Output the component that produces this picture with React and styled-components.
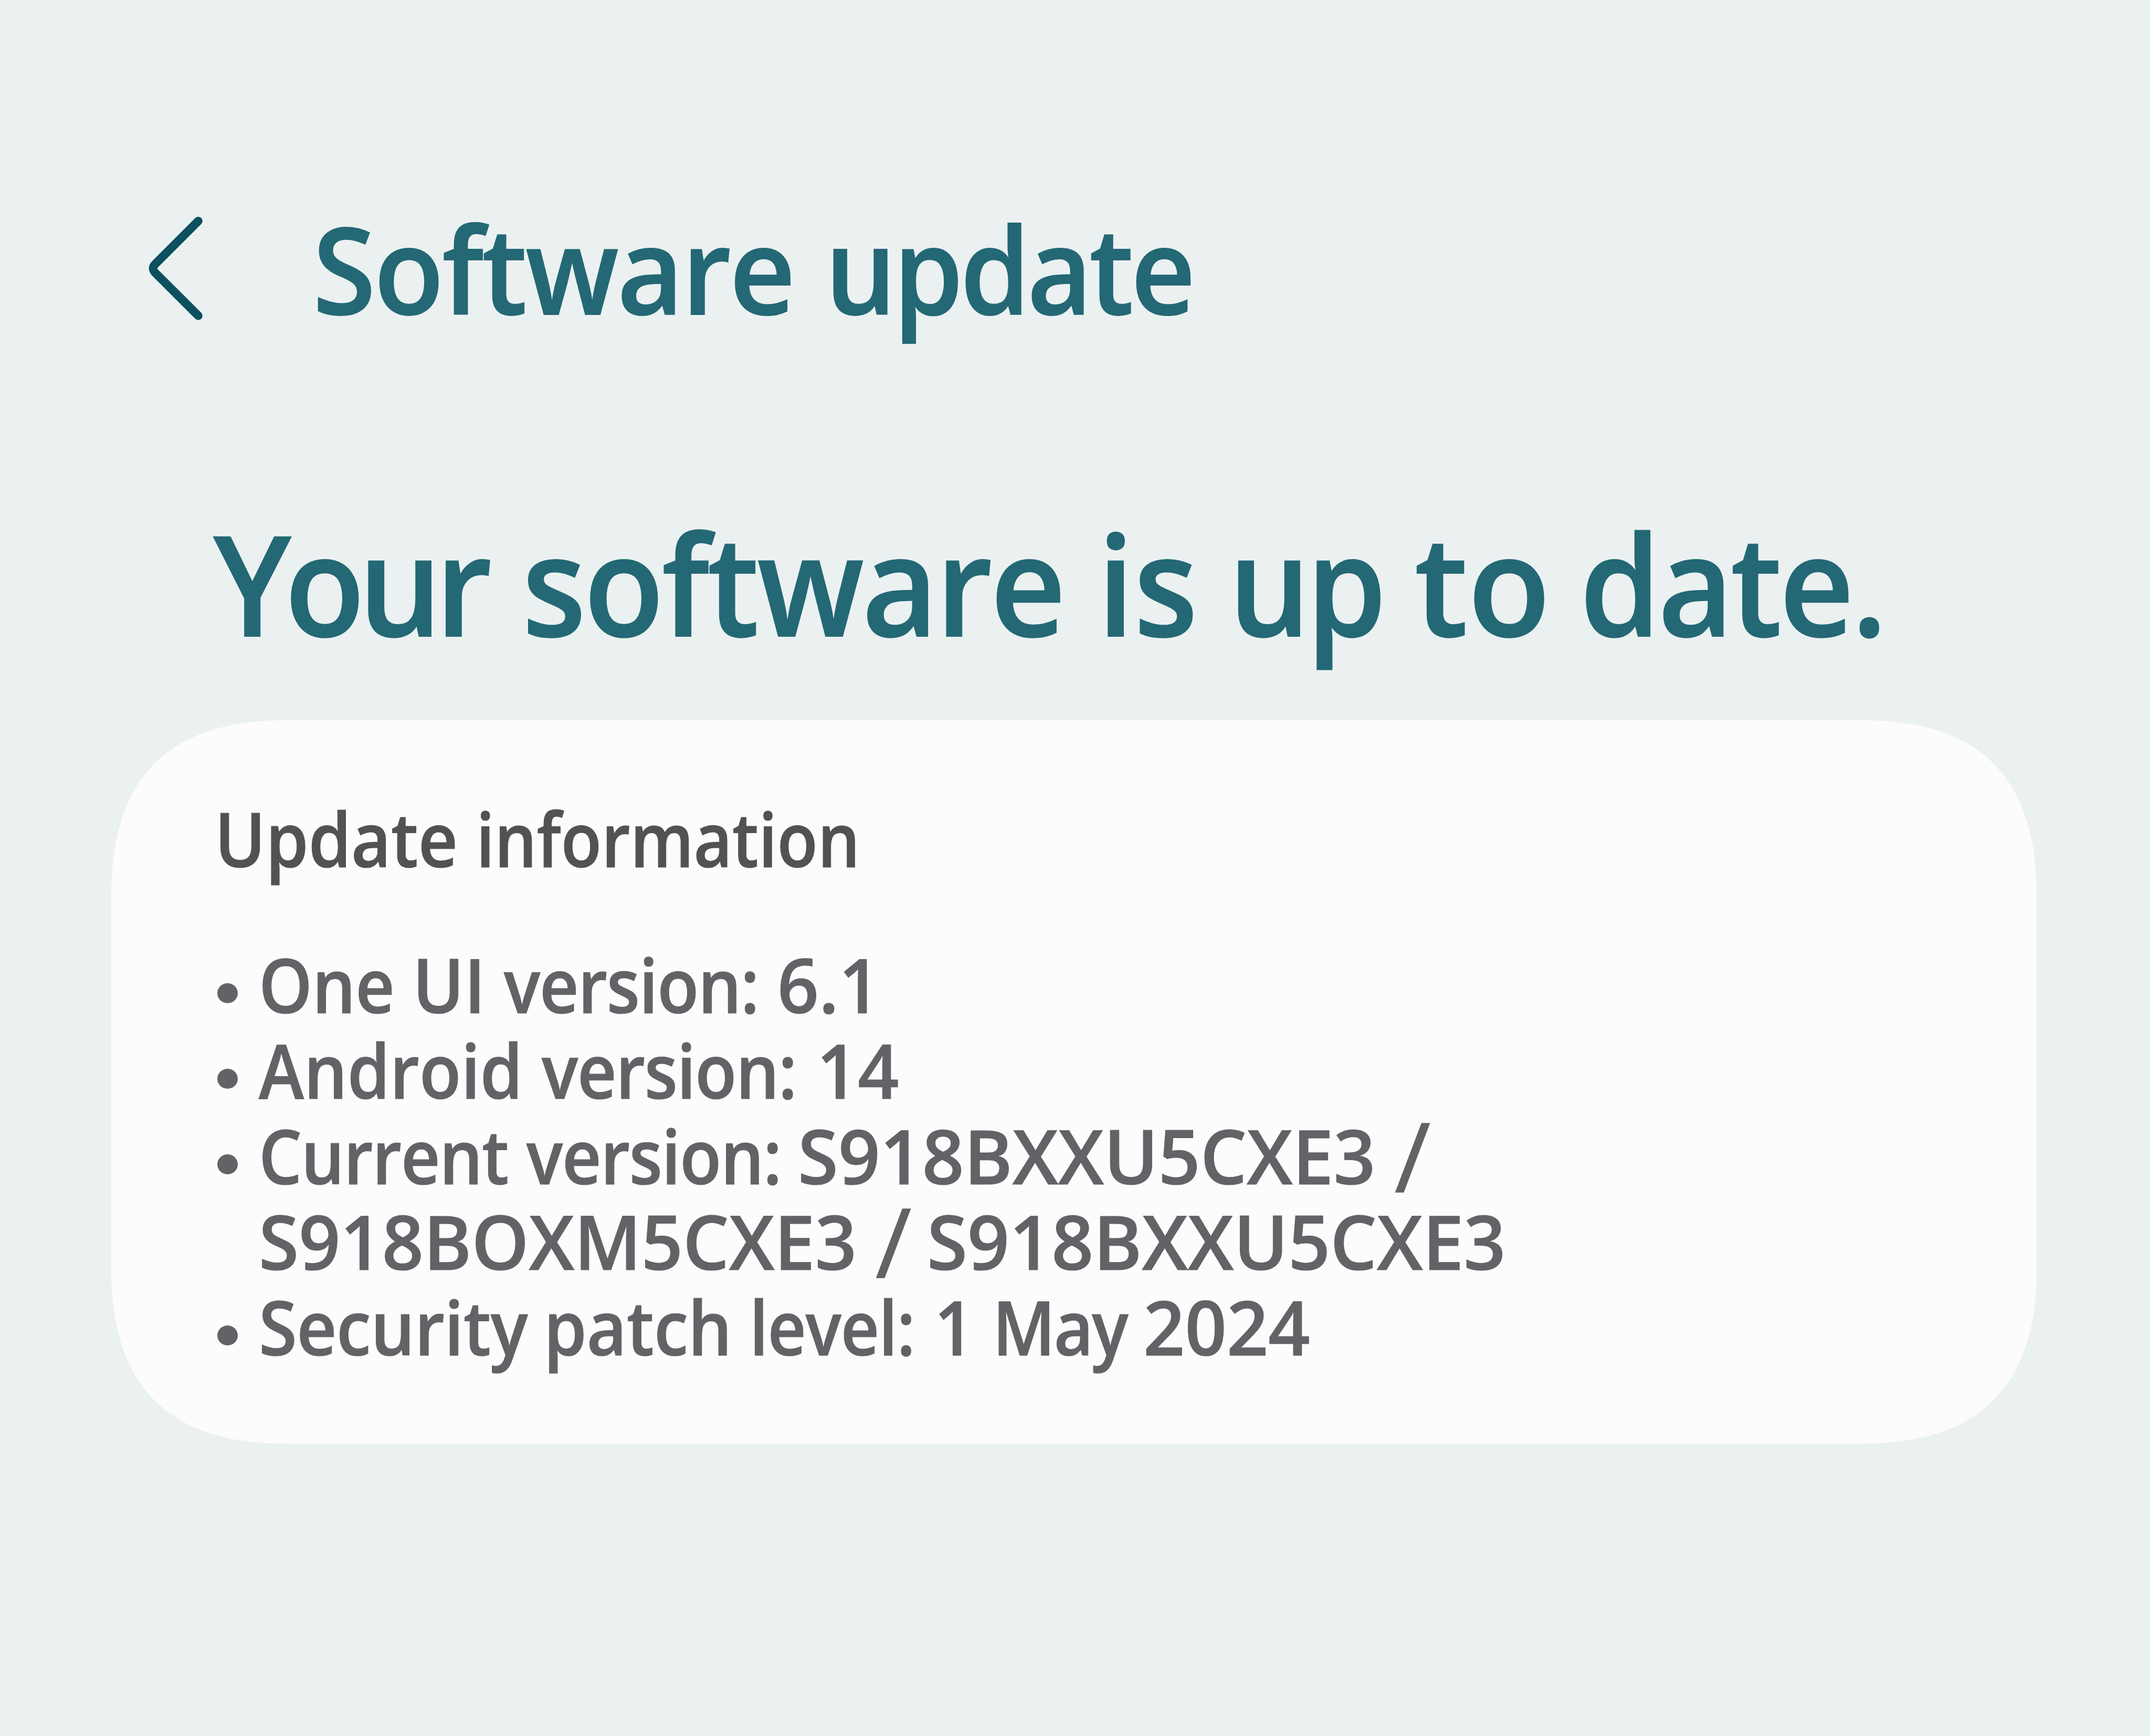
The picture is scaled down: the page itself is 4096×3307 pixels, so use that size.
import { Fragment } from "react";
import styled, { createGlobalStyle } from "styled-components";

const teal = "#246875";
const darkTeal = "#0b5060";

const GlobalStyle = createGlobalStyle`
  body {
    margin: 0;
    background-color: #ebf1f1;
    font-family: "Open Sans", "Noto Sans", sans-serif;
    font-weight: 600;
  }
`;

const Page = styled.main`
  box-sizing: border-box;
  width: 4096px;
  height: 3307px;
  overflow: hidden;
  padding: 360px 216px 0 212px;
  background-color: #ebf1f1;
`;

const Header = styled.header`
  display: flex;
  align-items: flex-start;
  height: 300px;
  padding-left: 71px;
`;

const BackButton = styled.button`
  display: flex;
  width: 103px;
  margin: 53px 210px 0 0;
  padding: 0;
  border: 0;
  background: none;
  color: ${darkTeal};
`;

const Title = styled.h1`
  margin: 0;
  font-size: 229px;
  font-weight: 600;
  line-height: 300px;
  color: ${teal};
  white-space: nowrap;
`;

const Status = styled.h2`
  margin: 300px 0 0 195px;
  font-size: 265px;
  font-weight: 600;
  line-height: 300px;
  color: ${teal};
  white-space: nowrap;
`;

const Card = styled.section`
  box-sizing: border-box;
  width: 3668px;
  height: 1378px;
  margin-top: 112px;
  padding: 125px 195px 0 202px;
  background-color: #fcfcfc;
  /* squircle corners */
  clip-path: path(
    "M0 332C0 109 109 0 332 0H3336C3559 0 3668 109 3668 332V1046C3668 1269 3559 1378 3336 1378H332C109 1378 0 1269 0 1046Z"
  );
`;

const CardTitle = styled.h3`
  margin: 0 0 96px -5px;
  font-size: 143px;
  font-weight: 600;
  line-height: 200px;
  color: #525252;
  white-space: nowrap;
`;

const InfoList = styled.ul`
  margin: 0;
  padding: 0;
  list-style: none;
`;

const InfoItem = styled.li`
  display: flex;
  font-size: 144px;
  line-height: 163px;
  color: #636266;
  white-space: nowrap;

  &::before {
    content: "";
    flex: none;
    width: 39px;
    height: 38px;
    margin: 80px 40px 0 0;
    border-radius: 50%;
    background-color: #636266;
  }
`;

const Line = styled.div`
  height: 163px;
`;

/* condensed word: $w is the room it takes, $s its horizontal scale */
const Word = styled.span`
  display: inline-block;
  width: ${({ $w }) => ($w ? `${$w}px` : "auto")};
  letter-spacing: ${({ $track = 0 }) => $track}px;
  transform: scaleX(${({ $s }) => $s});
  transform-origin: left;
  -webkit-text-stroke: 0.008em currentColor;
`;

const Slash = styled(Word)`
  font-size: 1.27em;
  font-weight: 400;
  line-height: 0;
  vertical-align: -15px;
`;

const title = [
  { text: "Software", s: 0.95, w: 916, track: -3.1 },
  { text: "update", s: 0.93, track: -5.5 },
];

const status = [
  { text: "Your", s: 0.94, w: 519, track: -12.4 },
  { text: "software", s: 0.94, w: 1027, track: -3.8 },
  { text: "is", s: 0.94, w: 181 },
  { text: "up", s: 0.92, w: 285.6, track: -7 },
  { text: "to", s: 0.97, w: 246.6 },
  { text: "date.", s: 0.93, track: -4.9 },
];

const cardTitle = [
  { text: "Update", s: 0.915, w: 461 },
  { text: "information", s: 0.886 },
];

const info = [
  [
    [
      { text: "One", s: 0.9, w: 256 },
      { text: "UI", s: 0.92, w: 136 },
      { text: "version:", s: 0.9, w: 483.4, track: -1.5 },
      { text: "6.1", s: 0.96 },
    ],
  ],
  [
    [
      { text: "Android", s: 0.904, w: 501.3 },
      { text: "version:", s: 0.9, w: 487, track: -1.5 },
      { text: "14", s: 0.95 },
    ],
  ],
  [
    [
      { text: "Current", s: 0.9, w: 472.6, track: -1.5 },
      { text: "version:", s: 0.9, w: 479.2, track: -1.5 },
      { text: "S918BXXU5CXE3", s: 0.971, w: 1100 },
      { text: "/", s: 1.02 },
    ],
    [
      { text: "S918BOXM5CXE3", s: 0.963, w: 1137.1 },
      { text: "/", s: 1.02, w: 61.5 },
      { text: "S918BXXU5CXE3", s: 0.973 },
    ],
  ],
  [
    [
      { text: "Security", s: 0.92, w: 506, track: -0.6 },
      { text: "patch", s: 0.912, w: 354.6 },
      { text: "level:", s: 0.885, w: 314, track: -1.2 },
      { text: "1", s: 0.92, w: 74 },
      { text: "May", s: 0.9, w: 249, track: -3 },
      { text: "2024", s: 0.965 },
    ],
  ],
];

function Words({ words }) {
  return words.map(({ text, s, w, track }, i) => {
    const Tag = text === "/" ? Slash : Word;
    return (
      <Fragment key={i}>
        {i > 0 && " "}
        <Tag $s={s} $w={w} $track={track}>
          {text}
        </Tag>
      </Fragment>
    );
  });
}

function BackIcon() {
  return (
    <svg width="103" height="197" viewBox="298.6 436 108.6 207.8" fill="none">
      <path
        d="M398.5 444.5L312 531Q303.5 539.7 312 548.4L398.5 634.8"
        stroke="currentColor"
        strokeWidth="17"
        strokeLinecap="round"
      />
    </svg>
  );
}

export default function App() {
  return (
    <Page>
      <GlobalStyle />
      <Header>
        <BackButton aria-label="Back">
          <BackIcon />
        </BackButton>
        <Title>
          <Words words={title} />
        </Title>
      </Header>
      <Status>
        <Words words={status} />
      </Status>
      <Card>
        <CardTitle>
          <Words words={cardTitle} />
        </CardTitle>
        <InfoList>
          {info.map((lines, i) => (
            <InfoItem key={i}>
              <div>
                {lines.map((words, j) => (
                  <Line key={j}>
                    <Words words={words} />
                  </Line>
                ))}
              </div>
            </InfoItem>
          ))}
        </InfoList>
      </Card>
    </Page>
  );
}
